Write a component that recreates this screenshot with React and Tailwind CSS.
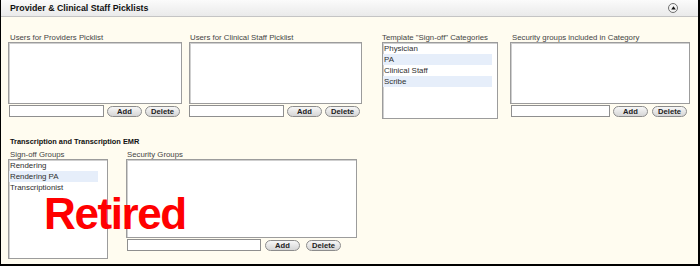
import React from "react";

const font = "font-['Liberation_Sans',Arial,sans-serif]";

function PillButton({ children, className = "" }) {
  return (
    <button
      className={`h-[11px] rounded-full border border-[#8c8c8c] bg-gradient-to-b from-[#f7f7f7] to-[#d6d6d6] text-[7.6px] font-bold leading-[9px] text-[#222] ${className}`}
    >
      {children}
    </button>
  );
}

function ListBox({ items = [], highlight = [], className = "", rowInset = "" }) {
  return (
    <div className={`border border-[#9c9c9c] bg-white shadow-[inset_1px_1px_0_#cfcfcf] ${className}`}>
      {items.map((item, i) => (
        <div
          key={item}
          className={`h-[11px] pl-[1px] text-[7.9px] leading-[11px] text-[#2e2e2e] ${rowInset} ${
            highlight.includes(i) ? "bg-[#e6eefa]" : ""
          }`}
        >
          {item}
        </div>
      ))}
    </div>
  );
}

function Label({ children, className = "" }) {
  return (
    <div className={`h-[9px] whitespace-nowrap text-[7.8px] leading-[9px] text-[#444] ${className}`}>
      {children}
    </div>
  );
}

function Controls({ inputW, addGap, delGap, className = "" }) {
  return (
    <div className={`flex items-start ${className}`}>
      <input className={`h-[12px] border border-[#8f8f8f] bg-white ${inputW}`} />
      <PillButton className={`mt-[1px] w-[35px] ${addGap}`}>Add</PillButton>
      <PillButton className={`mt-[1px] w-[35px] ${delGap}`}>Delete</PillButton>
    </div>
  );
}

export default function App() {
  return (
    <div
      className={`relative h-[266px] w-[700px] overflow-hidden border-b-2 border-l border-r-2 border-black bg-[#fffcf0] ${font}`}
    >
      {/* Header */}
      <div className="flex h-[17px] items-center justify-between border-b border-[#c4c4c4] bg-gradient-to-b from-[#fbfbfb] to-[#eaeaea] pl-[9px] pr-[20px]">
        <span className="text-[8.8px] font-bold leading-none text-[#111]">
          Provider &amp; Clinical Staff Picklists
        </span>
        <span className="flex h-[10px] w-[10px] items-center justify-center rounded-full border-[1.5px] border-[#707070] bg-[#f4f4f4]">
          <svg width="5" height="4" viewBox="0 0 5 4">
            <path d="M2.5 0.3 L4.8 3.6 L0.2 3.6 Z" fill="#111" />
          </svg>
        </span>
      </div>

      {/* Providers / Clinical staff / categories */}
      <div className="flex items-start pt-[16px]">
        <div className="ml-[7px] w-[174px]">
          <Label className="pl-[2px]">Users for Providers Picklist</Label>
          <ListBox className="h-[62px]" />
          <Controls className="mt-[1px] pl-[1px]" inputW="w-[95px]" addGap="ml-[3px]" delGap="ml-[3px]" />
        </div>

        <div className="ml-[7px] w-[173px]">
          <Label className="pl-[1px]">Users for Clinical Staff Picklist</Label>
          <ListBox className="h-[62px]" />
          <Controls className="mt-[1px]" inputW="w-[95px]" addGap="ml-[3px]" delGap="ml-[3px]" />
        </div>

        <div className="ml-[20px] w-[116px]">
          <Label>Template "Sign-off" Categories</Label>
          <ListBox
            className="h-[77px]"
            rowInset="mr-[5px]"
            items={["Physician", "PA", "Clinical Staff", "Scribe"]}
            highlight={[1, 3]}
          />
        </div>

        <div className="ml-[12px] w-[180px]">
          <Label className="pl-[2px]">Security groups included in Category</Label>
          <ListBox className="h-[62px]" />
          <Controls className="mt-[1px] pl-[1px]" inputW="w-[99px]" addGap="ml-[3px]" delGap="ml-[4px]" />
        </div>
      </div>

      {/* Transcription */}
      <div className="mt-[18px] pl-[9px] text-[7.4px] font-bold leading-[9px] text-[#111]">
        Transcription and Transcription EMR
      </div>
      <div className="mt-[4px] flex items-start">
        <div className="ml-[7px] w-[100px]">
          <Label className="pl-[2px]">Sign-off Groups</Label>
          <ListBox
            className="h-[100px]"
            rowInset="mr-[9px]"
            items={["Rendering", "Rendering PA", "Transcriptionist"]}
            highlight={[1]}
          />
        </div>
        <div className="ml-[18px] w-[231px]">
          <Label className="pl-[1px]">Security Groups</Label>
          <ListBox className="h-[79px]" />
          <Controls className="mt-[1px] pl-[1px]" inputW="w-[134px]" addGap="ml-[4px]" delGap="ml-[6px]" />
        </div>
      </div>

      {/* Overlay stamp */}
      <div className="absolute left-[43px] top-[192px] text-[44px] font-bold leading-none tracking-[-1.4px] text-[#ff0000]">
        Retired
      </div>
    </div>
  );
}
